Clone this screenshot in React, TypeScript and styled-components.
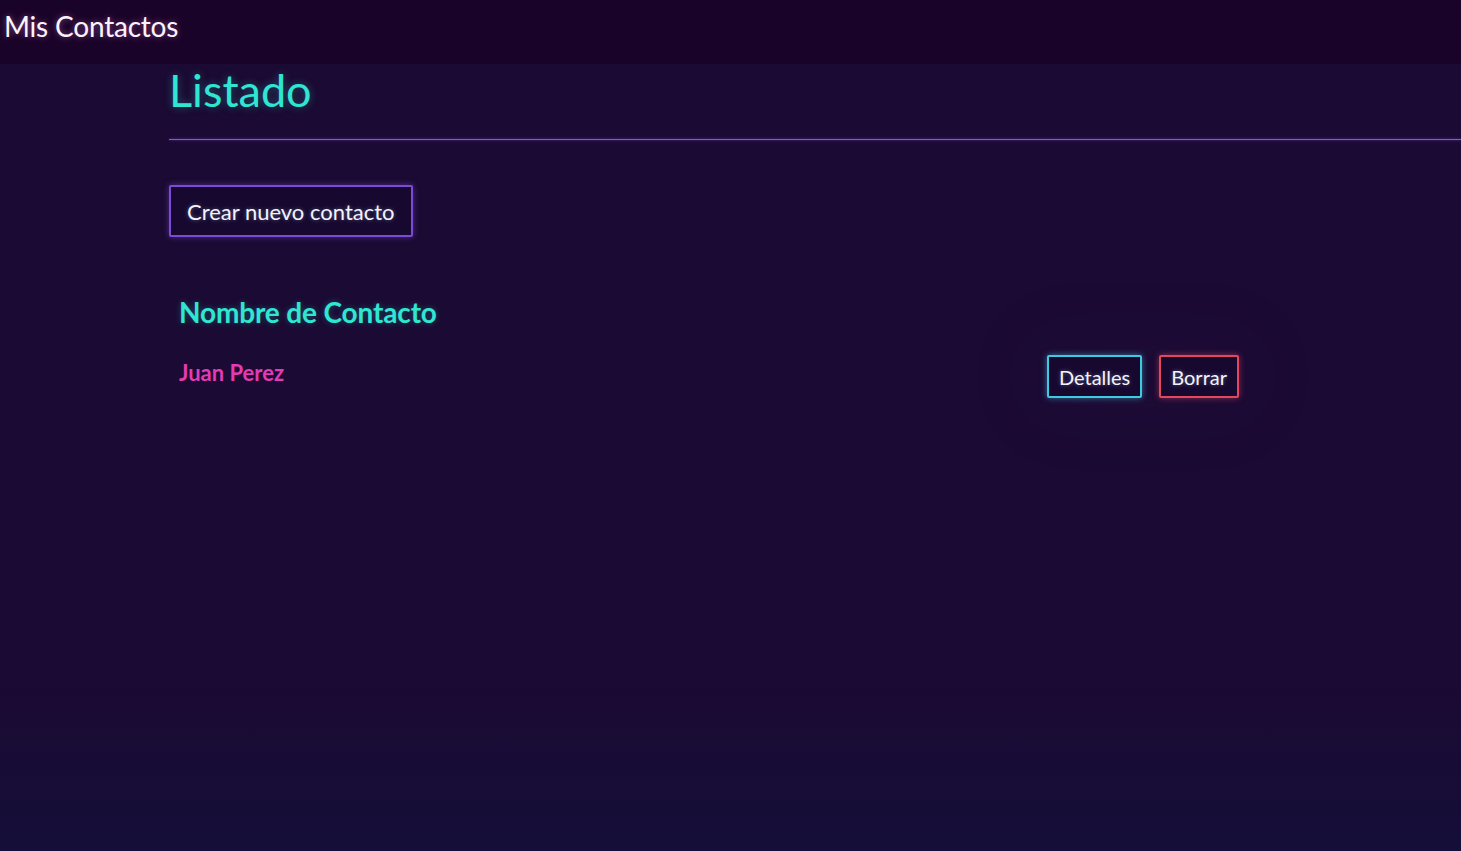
import styled, { createGlobalStyle } from "styled-components";

const GlobalStyle = createGlobalStyle`
  *, *::before, *::after {
    box-sizing: border-box;
  }
  html, body {
    margin: 0;
    padding: 0;
    height: 100%;
  }
  body {
    font-family: Lato, "Noto Sans", sans-serif;
    background: #1b0a33;
  }
  #root {
    min-height: 100%;
  }
`;

const Page = styled.div`
  min-height: 851px;
  display: flex;
  flex-direction: column;
  background: linear-gradient(180deg, #1b0a33 0%, #1b0a33 80%, #140e38 100%);
`;

const TopBar = styled.header`
  height: 64px;
  background: #1a0329;
  display: flex;
  align-items: flex-start;
  padding: 0 4px;
`;

const Brand = styled.div`
  font-size: 28px;
  line-height: 52px;
  color: #fbf4ff;
  letter-spacing: -0.2px;
  text-shadow: 0 0 6px rgba(255, 150, 230, 0.45);
`;

const Main = styled.main`
  flex: 1;
  padding-left: 169px;
`;

const Title = styled.h1`
  margin: 0;
  padding: 2px 0 25px;
  font-size: 45px;
  line-height: 48px;
  font-weight: 400;
  color: #30e6d3;
  text-shadow: 0 0 8px rgba(48, 230, 211, 0.35);
`;

const Divider = styled.hr`
  margin: 0;
  border: 0;
  height: 1px;
  background: #8a52e6;
  box-shadow: 0 0 3px rgba(140, 80, 240, 0.7);
`;

const Toolbar = styled.div`
  padding-top: 45px;
  display: flex;
`;

const NeonButton = styled.button<{ $tone: string }>`
  font-family: Lato, "Noto Sans", sans-serif;
  color: #f5f2ff;
  background: #170830;
  border: 2px solid ${(p) => p.$tone};
  border-radius: 2px;
  box-shadow: 0 0 6px ${(p) => p.$tone}88;
  text-shadow: 0 0 4px rgba(200, 255, 255, 0.35);
  cursor: pointer;
`;

const CreateButton = styled(NeonButton)`
  height: 52px;
  font-size: 22px;
  padding: 0 16px;
`;

const ContactList = styled.section`
  width: 1080px;
  margin-top: 58px;
  padding: 0 10px;
`;

const ListHeader = styled.h2`
  margin: 0;
  font-size: 28px;
  line-height: 34px;
  font-weight: 700;
  letter-spacing: -0.15px;
  color: #30e6d3;
  text-shadow: 0 0 6px rgba(48, 230, 211, 0.3);
`;

const ContactRow = styled.div`
  display: flex;
  align-items: center;
  justify-content: space-between;
  margin-top: 26px;
`;

const ContactName = styled.div`
  font-size: 22px;
  font-weight: 700;
  color: #e23bb4;
  margin-top: -8px;
`;

const Actions = styled.div`
  display: flex;
  gap: 17px;
  border-radius: 40px;
  box-shadow: 0 0 50px 25px rgba(40, 18, 70, 0.2);
`;

const RowButton = styled(NeonButton)`
  height: 43px;
  font-size: 20px;
  padding: 0 10px;
`;

const contacts = [{ id: 1, name: "Juan Perez" }];

export default function App() {
  return (
    <Page>
      <GlobalStyle />
      <TopBar>
        <Brand>Mis Contactos</Brand>
      </TopBar>
      <Main>
        <Title>Listado</Title>
        <Divider />
        <Toolbar>
          <CreateButton $tone="#7b4bd6">Crear nuevo contacto</CreateButton>
        </Toolbar>
        <ContactList>
          <ListHeader>Nombre de Contacto</ListHeader>
          {contacts.map((c) => (
            <ContactRow key={c.id}>
              <ContactName>{c.name}</ContactName>
              <Actions>
                <RowButton $tone="#41c9e2">Detalles</RowButton>
                <RowButton $tone="#e2475e">Borrar</RowButton>
              </Actions>
            </ContactRow>
          ))}
        </ContactList>
      </Main>
    </Page>
  );
}
